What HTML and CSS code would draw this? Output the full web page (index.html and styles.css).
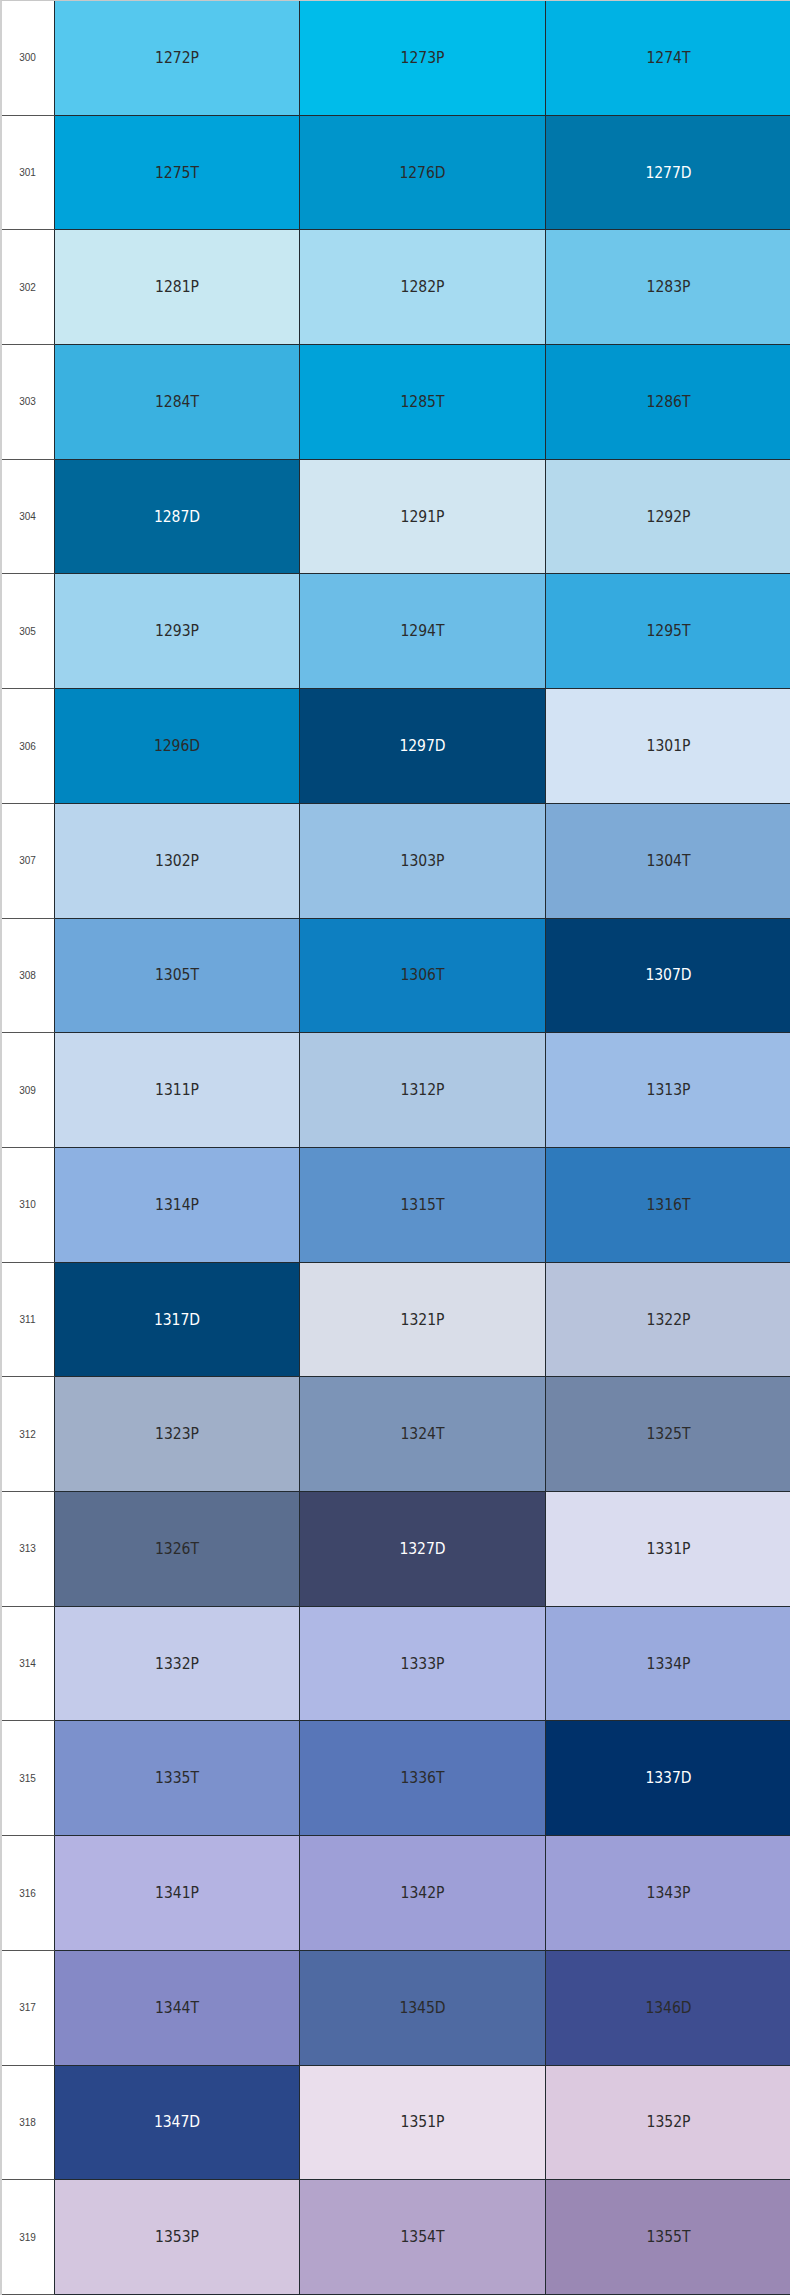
FILE: index.html
```html
<!DOCTYPE html>
<html>
<head>
<meta charset="utf-8">
<link rel="stylesheet" href="styles.css">
</head>
<body>
<div class="chart">
  <div class="num">300</div><div class="sw" style="background:#55C8EE">1272P</div><div class="sw" style="background:#00BCEA">1273P</div><div class="sw" style="background:#00B2E4">1274T</div>
  <div class="num">301</div><div class="sw" style="background:#00A3DA">1275T</div><div class="sw" style="background:#0095CB">1276D</div><div class="sw light" style="background:#0077AA">1277D</div>
  <div class="num">302</div><div class="sw" style="background:#C8E8F2">1281P</div><div class="sw" style="background:#A6DBF1">1282P</div><div class="sw" style="background:#6FC6EA">1283P</div>
  <div class="num">303</div><div class="sw" style="background:#3AB1E0">1284T</div><div class="sw" style="background:#00A2D9">1285T</div><div class="sw" style="background:#0096CF">1286T</div>
  <div class="num">304</div><div class="sw light" style="background:#006799">1287D</div><div class="sw" style="background:#D2E6F1">1291P</div><div class="sw" style="background:#B5D9EC">1292P</div>
  <div class="num">305</div><div class="sw" style="background:#9DD3EE">1293P</div><div class="sw" style="background:#6CBDE7">1294T</div><div class="sw" style="background:#35AADF">1295T</div>
  <div class="num">306</div><div class="sw" style="background:#0086C0">1296D</div><div class="sw light" style="background:#004677">1297D</div><div class="sw" style="background:#D3E3F4">1301P</div>
  <div class="num">307</div><div class="sw" style="background:#BAD5ED">1302P</div><div class="sw" style="background:#97C1E4">1303P</div><div class="sw" style="background:#7EAAD6">1304T</div>
  <div class="num">308</div><div class="sw" style="background:#6EA7DA">1305T</div><div class="sw" style="background:#0D7FC1">1306T</div><div class="sw light" style="background:#003F72">1307D</div>
  <div class="num">309</div><div class="sw" style="background:#C7D9EE">1311P</div><div class="sw" style="background:#AEC8E3">1312P</div><div class="sw" style="background:#9CBCE6">1313P</div>
  <div class="num">310</div><div class="sw" style="background:#8DB1E2">1314P</div><div class="sw" style="background:#5C92CB">1315T</div><div class="sw" style="background:#2E7ABC">1316T</div>
  <div class="num">311</div><div class="sw light" style="background:#004576">1317D</div><div class="sw" style="background:#D9DDE8">1321P</div><div class="sw" style="background:#B8C3DB">1322P</div>
  <div class="num">312</div><div class="sw" style="background:#A0AFC8">1323P</div><div class="sw" style="background:#7C94B7">1324T</div><div class="sw" style="background:#7286A7">1325T</div>
  <div class="num">313</div><div class="sw" style="background:#5B6E8F">1326T</div><div class="sw light" style="background:#3E4669">1327D</div><div class="sw" style="background:#DADCEF">1331P</div>
  <div class="num">314</div><div class="sw" style="background:#C4CBEA">1332P</div><div class="sw" style="background:#AFB8E5">1333P</div><div class="sw" style="background:#9AAADD">1334P</div>
  <div class="num">315</div><div class="sw" style="background:#7C91CC">1335T</div><div class="sw" style="background:#5876B8">1336T</div><div class="sw light" style="background:#00316A">1337D</div>
  <div class="num">316</div><div class="sw" style="background:#B4B3E2">1341P</div><div class="sw" style="background:#9E9FD7">1342P</div><div class="sw" style="background:#9D9FD7">1343P</div>
  <div class="num">317</div><div class="sw" style="background:#8589C6">1344T</div><div class="sw" style="background:#4F6AA2">1345D</div><div class="sw" style="background:#3E4D90">1346D</div>
  <div class="num">318</div><div class="sw light" style="background:#2A4789">1347D</div><div class="sw" style="background:#EADEEC">1351P</div><div class="sw" style="background:#DCC9DF">1352P</div>
  <div class="num">319</div><div class="sw" style="background:#D4C6DF">1353P</div><div class="sw" style="background:#B4A4CB">1354T</div><div class="sw" style="background:#9A88B4">1355T</div>
</div>
</body>
</html>
```
FILE: styles.css
```css
html, body {
  margin: 0;
  padding: 0;
  background: #ffffff;
}
.chart {
  width: 790px;
  height: 2295px;
  box-sizing: border-box;
  display: grid;
  grid-template-columns: 53px 245px 246px 246px;
  grid-template-rows: repeat(20, 1fr);
  border-top: 1px solid #c8c8c8;
  border-left: 2px solid #d0d0d0;
}
.num, .sw {
  display: flex;
  align-items: center;
  justify-content: center;
  border-right: 1px solid #222a30;
  border-bottom: 1px solid #222a30;
}
.num {
  background: #ffffff;
  font-family: "Liberation Sans", Arial, sans-serif;
  font-size: 10px;
  color: #444444;
  border-bottom-color: #555555;
  padding-right: 1px;
}
.sw {
  font-family: "DejaVu Sans Condensed", "DejaVu Sans", sans-serif;
  font-size: 15.5px;
  letter-spacing: 0;
  color: #2b2b2b;
}
.sw.light {
  color: #ffffff;
}
```
